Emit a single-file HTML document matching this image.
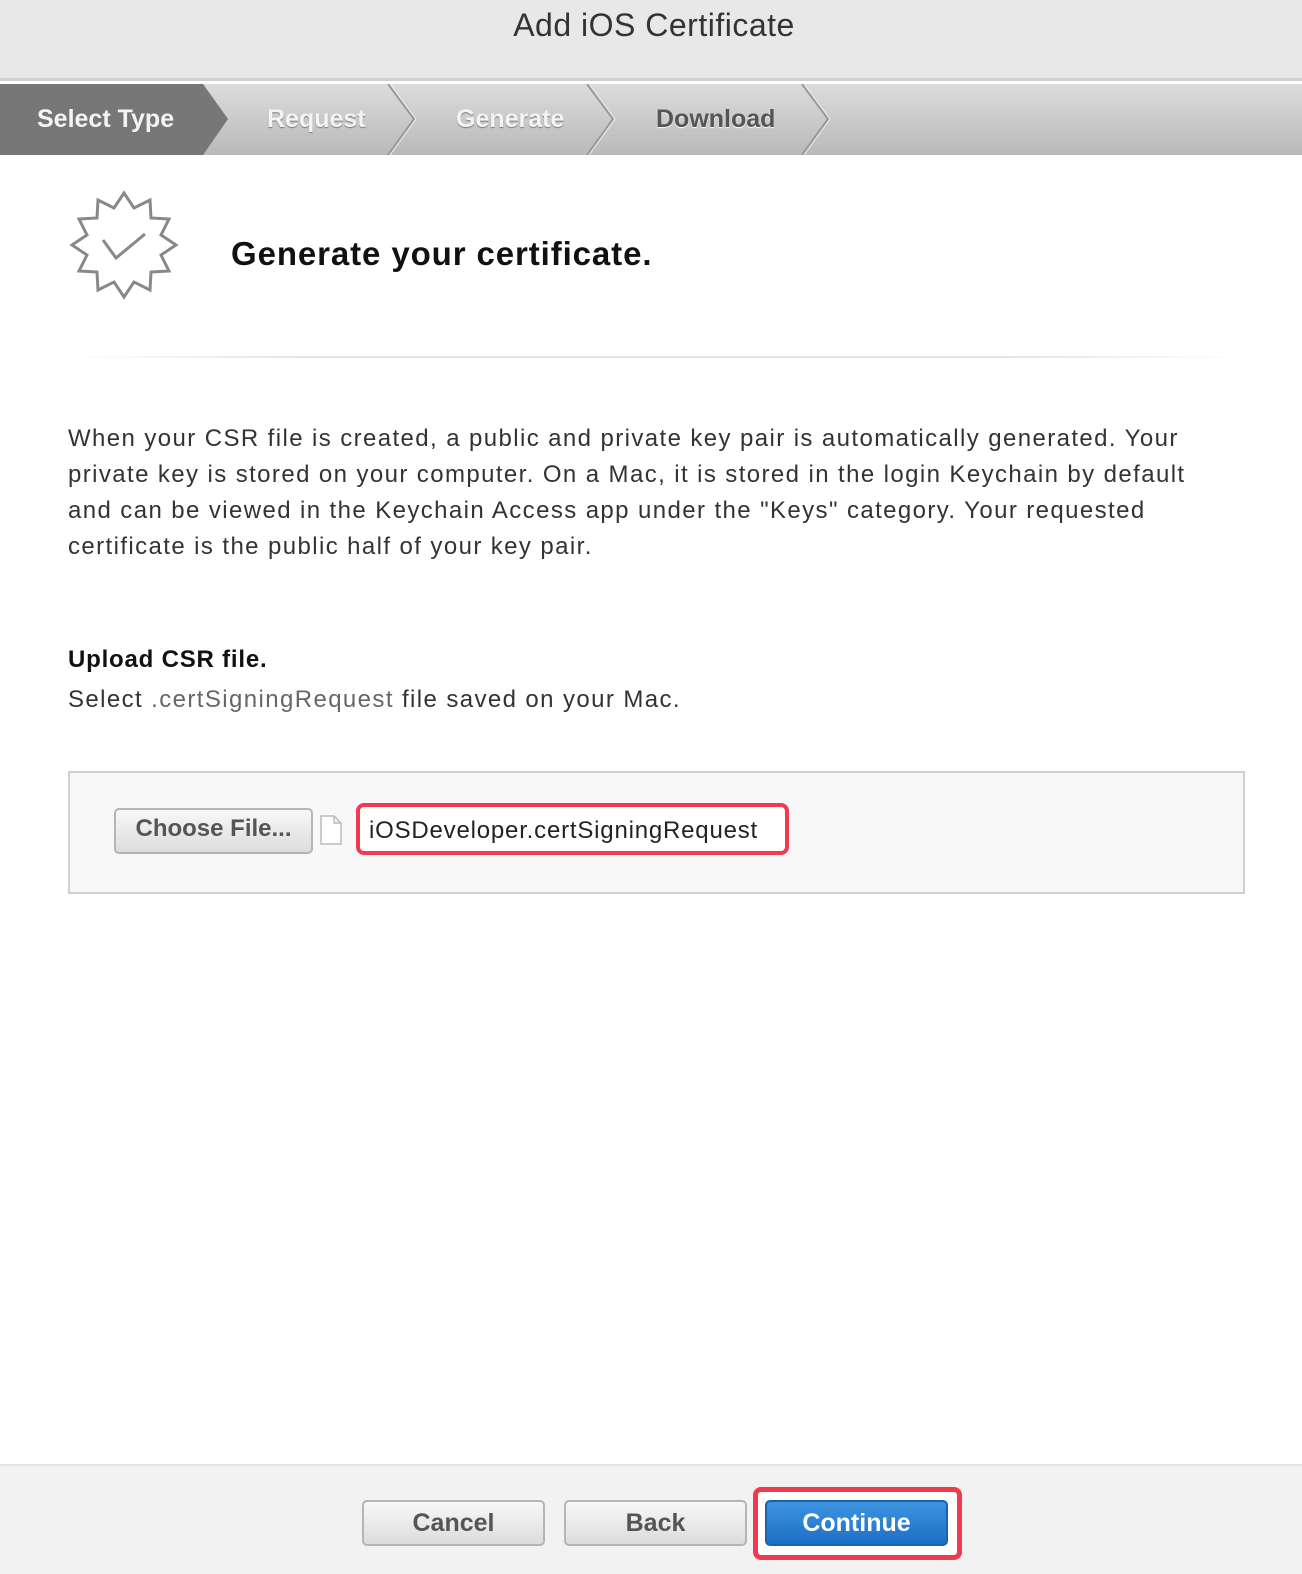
<!DOCTYPE html>
<html><head><meta charset="utf-8"><style>
*{margin:0;padding:0;box-sizing:border-box}
body{width:1302px;height:1574px;background:#fff;font-family:"Liberation Sans",sans-serif;position:relative;overflow:hidden;color:#222}
.hdr{position:absolute;left:0;top:0;width:1302px;height:81px;background:#e8e8e8;border-bottom:3px solid #cfcfcf}
.hdr h1{font-weight:normal;font-size:32px;color:#333;text-align:center;padding-top:7px;padding-left:6px;letter-spacing:0.5px}
.steps{position:absolute;left:0;top:84px;width:1302px;height:71px;background:linear-gradient(#dcdcdc,#b9b9b9)}
.steps span{position:absolute;top:21px;font-size:25px;font-weight:bold;color:#f4f4f4;text-shadow:0 1px 1px #777}
.p{position:absolute;left:68px;font-size:24px;line-height:36px;color:#333;white-space:nowrap;letter-spacing:1.4px}
.btn{position:absolute;height:46px;border:2px solid #b5b5b5;border-radius:5px;background:linear-gradient(#f8f8f8,#dcdcdc);font-weight:bold;font-size:25px;color:#555;text-align:center;line-height:42px}
</style></head><body>
<div class="hdr"><h1>Add iOS Certificate</h1></div>
<div class="steps">
<svg width="1302" height="71" style="position:absolute;left:0;top:0">
<polygon points="0,0 203,0 228,35 203,71 0,71" fill="#777"/>
<polyline points="388,0 414,35 388,71" fill="none" stroke="#999" stroke-width="2"/>
<polyline points="388,0 414,35 388,71" fill="none" stroke="#eee" stroke-width="1" transform="translate(2,0)"/>
<polyline points="587,0 613,35 587,71" fill="none" stroke="#999" stroke-width="2"/>
<polyline points="587,0 613,35 587,71" fill="none" stroke="#eee" stroke-width="1" transform="translate(2,0)"/>
<polyline points="802,0 828,35 802,71" fill="none" stroke="#999" stroke-width="2"/>
<polyline points="802,0 828,35 802,71" fill="none" stroke="#eee" stroke-width="1" transform="translate(2,0)"/>
</svg>
<span style="left:37px">Select Type</span>
<span style="left:267px">Request</span>
<span style="left:456px">Generate</span>
<span style="left:656px;color:#555;text-shadow:0 1px 1px #fff">Download</span>
</div>
<svg width="120" height="120" style="position:absolute;left:64px;top:185px" viewBox="64 183 120 120">
<polygon points="124,191 134,206 150,198 151,216 169,217 161,233 176,243 161,253 169,269 151,270 150,288 134,280 124,295 114,280 98,288 97,270 79,269 87,253 72,243 87,233 79,217 97,216 98,198 114,206" fill="none" stroke="#888" stroke-width="3" stroke-linejoin="miter"/>
<polyline points="103,238 116,256 145,232" fill="none" stroke="#888" stroke-width="3"/>
</svg>
<div style="position:absolute;left:231px;top:235px;font-size:33px;font-weight:bold;color:#111;letter-spacing:0.9px">Generate your certificate.</div>
<div style="position:absolute;left:68px;top:356px;width:1176px;height:2px;background:linear-gradient(90deg,#fff,#e4e4e4 20%,#e4e4e4 80%,#fff)"></div>
<div class="p" style="top:421px">When your CSR file is created, a public and private key pair is automatically generated. Your<br>private key is stored on your computer. On a Mac, it is stored in the login Keychain by default<br>and can be viewed in the Keychain Access app under the "Keys" category. Your requested<br>certificate is the public half of your key pair.</div>
<div class="p" style="top:642px;font-weight:bold;color:#111;letter-spacing:0.8px">Upload CSR file.</div>
<div class="p" style="top:682px">Select <span style="color:#666">.certSigningRequest</span> file saved on your Mac.</div>
<div style="position:absolute;left:68px;top:771px;width:1177px;height:123px;border:2px solid #d0d0d0;background:#f8f8f8"></div>
<div class="btn" style="left:114px;top:808px;width:199px;height:46px;font-size:24px;line-height:38px">Choose File...</div>
<svg width="24" height="30" style="position:absolute;left:319px;top:815px"><path d="M2,1 H15 L22,8 V29 H2 Z M15,1 V8 H22" fill="#fff" stroke="#bbb" stroke-width="1.5"/></svg>
<div style="position:absolute;left:356px;top:803px;width:433px;height:52px;border:4px solid #f03a4e;border-radius:8px;background:#fff;font-size:24px;line-height:48px;padding-left:9px;color:#222;letter-spacing:0.8px">iOSDeveloper.certSigningRequest</div>
<div style="position:absolute;left:0;top:1464px;width:1302px;height:110px;background:#f2f2f2;border-top:2px solid #e4e4e4"></div>
<div class="btn" style="left:362px;top:1500px;width:183px">Cancel</div>
<div class="btn" style="left:564px;top:1500px;width:183px">Back</div>
<div style="position:absolute;left:753px;top:1487px;width:209px;height:73px;border:5px solid #f03a4e;border-radius:8px;background:#fff"></div>
<div class="btn" style="left:765px;top:1500px;width:183px;background:linear-gradient(#3d94e0,#1d6fc4);border-color:#1c62b0;color:#fff">Continue</div>
</body></html>
